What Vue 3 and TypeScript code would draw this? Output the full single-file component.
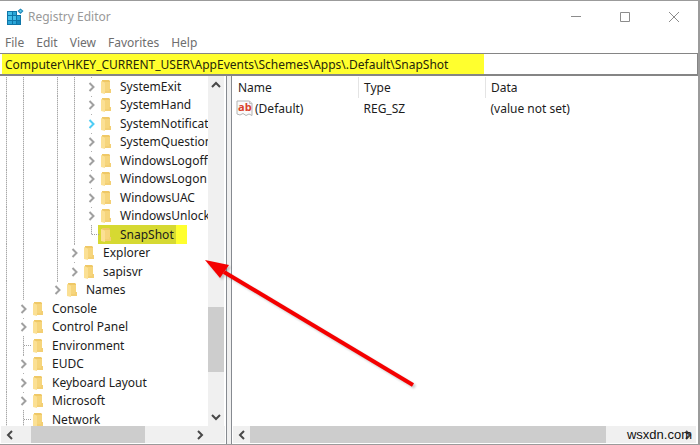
<script setup lang="ts">
import { ref } from 'vue'

// Each character of `cols` is one indent column:
// '|' guide, ' ' empty, '>' expander, '+' branch, 'L' last branch
interface TreeNode {
  cols: string
  name: string
  hot?: boolean
  selected?: boolean
}

const nodes: TreeNode[] = [
  { cols: '|| ||>', name: 'SystemExit' },
  { cols: '|| ||>', name: 'SystemHand' },
  { cols: '|| ||>', name: 'SystemNotification', hot: true },
  { cols: '|| ||>', name: 'SystemQuestion' },
  { cols: '|| ||>', name: 'WindowsLogoff' },
  { cols: '|| ||>', name: 'WindowsLogon' },
  { cols: '|| ||>', name: 'WindowsUAC' },
  { cols: '|| ||>', name: 'WindowsUnlock' },
  { cols: '|| ||L', name: 'SnapShot', selected: true },
  { cols: '|| |>', name: 'Explorer' },
  { cols: '|| |>', name: 'sapisvr' },
  { cols: '|| >', name: 'Names' },
  { cols: '|>', name: 'Console' },
  { cols: '|>', name: 'Control Panel' },
  { cols: '|+', name: 'Environment' },
  { cols: '|>', name: 'EUDC' },
  { cols: '|>', name: 'Keyboard Layout' },
  { cols: '|>', name: 'Microsoft' },
  { cols: '|+', name: 'Network' },
]

const menus = ['File', 'Edit', 'View', 'Favorites', 'Help']
const path = ref('Computer\\HKEY_CURRENT_USER\\AppEvents\\Schemes\\Apps\\.Default\\SnapShot')

const cellClass: Record<string, string> = {
  '|': 'guide',
  ' ': 'blank',
  '+': 'guide branch',
  L: 'last branch',
}
</script>

<template>
  <div class="window">
    <header class="titlebar">
      <svg class="app-icon" viewBox="0 0 17 18" aria-hidden="true">
        <path d="M0 3h14v14H0z" fill="#0f76a8" />
        <path d="M1 4h4v3H1zM1 8h4v4H1zM6 8h3v4H6z" fill="#45bfe8" />
        <path d="M6 4h3v3H6zM1 13h4v3H1zM6 13h3v3H6zM10 8h3v4h-3z" fill="#2ba6d8" />
        <path d="M10 13h3v3h-3z" fill="#1688bc" />
        <path d="M10 2h7v5h-7z" fill="#fff" />
        <path d="M13.500 0.500l3 2.500-3 3-3-3z" fill="#1c86b8" />
        <path d="M13.500 1.800l1.500 1.300-1.500 1.500-1.500-1.500z" fill="#62c8ea" />
      </svg>
      <h1>Registry Editor</h1>
      <div class="caption">
        <button type="button" aria-label="Minimize">
          <svg viewBox="0 0 12 12"><path d="M1 5.500h10" /></svg>
        </button>
        <button type="button" aria-label="Maximize">
          <svg viewBox="0 0 12 12"><path d="M1.500 1.500h9v9h-9z" /></svg>
        </button>
        <button type="button" aria-label="Close">
          <svg viewBox="0 0 12 12"><path d="M1 1l10 10M11 1L1 11" /></svg>
        </button>
      </div>
    </header>

    <nav class="menubar">
      <button v-for="m in menus" :key="m" type="button">{{ m }}</button>
    </nav>

    <div class="address">
      <input v-model="path" type="text" aria-label="Address" spellcheck="false" />
    </div>

    <main class="panes">
      <section class="pane tree-pane">
        <div class="tree-body">
          <ul class="tree">
            <li v-for="n in nodes" :key="n.name">
              <template v-for="(c, i) in n.cols.split('')" :key="i">
                <button
                  v-if="c === '>'"
                  type="button"
                  class="cell expander"
                  :class="{ hot: n.hot }"
                  :aria-label="'Expand ' + n.name"
                >
                  <svg viewBox="0 0 7 10"><path d="M1.500 1l4 4-4 4" /></svg>
                </button>
                <span v-else class="cell" :class="cellClass[c]"></span>
              </template>
              <span class="node" :class="{ selected: n.selected }">
                <svg class="folder" viewBox="0 0 11 14" aria-hidden="true">
                  <path d="M1 0h7l1 1v10H1z" fill="#efc866" />
                  <path d="M4 2h5v9.500H4z" fill="#f6d57c" />
                  <path d="M0 1l4 1.500V14L0 13z" fill="#fbe094" />
                  <path d="M8 9h2v4H4v-2h4z" fill="#f3cf74" />
                </svg>
                <span>{{ n.name }}</span>
              </span>
            </li>
          </ul>
          <div class="vscroll">
            <button type="button" aria-label="Scroll up">
              <svg viewBox="0 0 10 10"><path d="M1 7l4-4 4 4" /></svg>
            </button>
            <div class="track"><div class="thumb"></div></div>
            <button type="button" aria-label="Scroll down">
              <svg viewBox="0 0 10 10"><path d="M1 3l4 4 4-4" /></svg>
            </button>
          </div>
        </div>
        <div class="hscroll with-corner">
          <button type="button" aria-label="Scroll left">
            <svg viewBox="0 0 10 10"><path d="M7 1L3 5l4 4" /></svg>
          </button>
          <div class="track"><div class="thumb"></div></div>
          <button type="button" aria-label="Scroll right">
            <svg viewBox="0 0 10 10"><path d="M3 1l4 4-4 4" /></svg>
          </button>
        </div>
      </section>

      <section class="pane list-pane">
        <div class="list-body">
          <table>
            <thead>
              <tr>
                <th class="c-name" scope="col">Name</th>
                <th class="c-type" scope="col">Type</th>
                <th scope="col">Data</th>
              </tr>
            </thead>
            <tbody>
              <tr>
                <td class="value">
                  <svg class="ab" viewBox="0 0 17 17" aria-hidden="true">
                    <path d="M1 1h12.500l2.500 2.500v12l-3-1.500-3 1.500-3-2-3 1.500-3-1z" fill="#fafafa" stroke="#b4b4b4" />
                    <path d="M13.500 1v2.500H16" fill="#ddd" stroke="#c0c0c0" />
                    <text x="2" y="11">ab</text>
                  </svg>
                  <span>(Default)</span>
                </td>
                <td>REG_SZ</td>
                <td>(value not set)</td>
              </tr>
            </tbody>
          </table>
        </div>
        <div class="hscroll">
          <button type="button" aria-label="Scroll left">
            <svg viewBox="0 0 10 10"><path d="M7 1L3 5l4 4" /></svg>
          </button>
          <div class="track"><div class="thumb"></div></div>
          <button type="button" aria-label="Scroll right">
            <svg viewBox="0 0 10 10"><path d="M3 1l4 4-4 4" /></svg>
          </button>
        </div>
      </section>
    </main>

    <svg class="arrow" viewBox="0 0 220 136" aria-hidden="true">
      <g class="shadow" transform="translate(2 2)">
        <path d="M20 13l189 113" />
        <path class="head" d="M1 1l24 5-9 13z" />
      </g>
      <path d="M20 13l189 113" />
      <path class="head" d="M1 1l24 5-9 13z" />
    </svg>
    <span class="watermark">wsxdn.com</span>
  </div>
</template>

<style>
body {
  margin: 0;
  background: #fff;
}
</style>

<style scoped>
.window {
  position: relative;
  display: flex;
  flex-direction: column;
  box-sizing: border-box;
  height: 100vh;
  overflow: hidden;
  border: 1px solid #9b9b9b;
  border-width: 1px 2px 1px 0;
  background: #fff;
  color: #1c1c1c;
  font: 12px/18px "Noto Sans", "Open Sans", sans-serif;
}
button {
  display: flex;
  align-items: center;
  justify-content: center;
  margin: 0;
  padding: 0;
  border: 0;
  background: none;
  color: inherit;
  font: inherit;
}
svg {
  display: block;
  flex: none;
}

.titlebar {
  display: flex;
  align-items: center;
  height: 31px;
  padding-left: 7px;
}
.app-icon {
  width: 17px;
  height: 18px;
}
h1 {
  flex: 1;
  margin: 0;
  padding-left: 4px;
  color: #999;
  font-size: 12px;
  font-weight: 400;
}
.caption {
  display: flex;
}
.caption button {
  width: 49px;
  height: 30px;
}
.caption svg {
  width: 12px;
  height: 12px;
  fill: none;
  stroke: #8c8c8c;
}

.menubar {
  display: flex;
  gap: 12px;
  height: 21px;
  padding-left: 5px;
  color: #6e6e6e;
}

.address {
  display: flex;
  padding-left: 2px;
  border: 1px solid #858585;
  border-width: 1px 1px 2px 0;
}
.address input {
  flex: 1;
  min-width: 0;
  height: 20px;
  margin: 0;
  padding: 0 3px;
  border: 0;
  outline: 0;
  background: linear-gradient(90deg, #ffff2e 482px, #fff 482px);
  color: #26260a;
  font: inherit;
}

.panes {
  display: flex;
  flex: 1;
  gap: 4px;
  min-height: 0;
  background: #f0f0f0;
}
.pane {
  display: flex;
  flex-direction: column;
  min-width: 0;
  box-sizing: border-box;
  background: #fff;
}
.tree-pane {
  width: 227px;
  padding: 0 1px 1px;
  border-right: 1px solid #868a90;
}
.list-pane {
  flex: 1;
  padding: 0 2px 1px 1px;
  border-left: 1px solid #868a90;
}
.tree-body {
  display: flex;
  flex: 1;
  min-height: 0;
}
.tree {
  flex: 1;
  min-width: 0;
  margin: 0;
  padding: 1px 0 0;
  overflow: hidden;
  list-style: none;
}
.tree li {
  display: flex;
  height: 19px;
  margin-left: -3px;
  white-space: nowrap;
}
.tree li:nth-child(even) {
  height: 18px;
}
.cell {
  position: relative;
  flex: none;
  width: 17px;
}
.guide {
  background: repeating-linear-gradient(#a8a8a8 0 1px, #dedede 1px 2px) 8px 0 / 1px 100% no-repeat;
}
.last {
  background: repeating-linear-gradient(#a8a8a8 0 1px, #dedede 1px 2px) 8px 0 / 1px 10px no-repeat;
}
.branch::after {
  content: "";
  position: absolute;
  top: 9px;
  left: 9px;
  width: 7px;
  border-top: 1px dotted #a0a0a0;
}
.expander {
  background: linear-gradient(#b0b0b0, #b0b0b0) 8px 0 / 1px 1px no-repeat;
}
.expander svg {
  width: 7px;
  height: 10px;
  fill: none;
  stroke: #a0a0a0;
  stroke-width: 2;
}
.expander.hot svg {
  stroke: #4fccf4;
}
.node {
  display: flex;
  align-items: center;
  gap: 8px;
  margin-left: -2px;
  padding: 0 2px 0 3px;
}
.folder {
  width: 11px;
  height: 14px;
}
.selected {
  background: #d6d932;
  box-shadow: 11px 0 #ffff2e;
}

.vscroll {
  display: flex;
  flex-direction: column;
  width: 16px;
  margin-right: 1px;
  background: #f0f0f0;
}
.vscroll button {
  height: 18px;
}
.vscroll .track {
  display: flex;
  flex: 1;
  flex-direction: column;
  min-height: 0;
}
.vscroll .thumb {
  height: 65px;
  margin-top: 213px;
  background: #cdcdcd;
}
.vscroll svg,
.hscroll svg {
  width: 10px;
  height: 10px;
  fill: none;
  stroke: #484848;
  stroke-width: 2;
}
.hscroll {
  display: flex;
  height: 17px;
  background: #f0f0f0;
}
.hscroll.with-corner {
  padding-right: 17px;
}
.hscroll button {
  width: 17px;
}
.hscroll .track {
  display: flex;
  flex: 1;
}
.hscroll .thumb {
  width: 83%;
  background: #cdcdcd;
}
.with-corner .thumb {
  width: 66%;
  margin-left: 13px;
}

.list-body {
  flex: 1;
  min-height: 0;
}
table {
  width: 100%;
  margin-top: 1px;
  border-collapse: collapse;
  table-layout: fixed;
}
th,
td {
  height: 21px;
  padding: 0 0 0 5px;
  font-weight: 400;
  text-align: left;
  white-space: nowrap;
}
th {
  border-right: 1px solid #e4e4e4;
}
th:last-child {
  border-right: 0;
}
.c-name {
  width: 120px;
}
.c-type {
  width: 121px;
}
.value {
  display: flex;
  align-items: center;
  gap: 2px;
  padding-left: 3px;
}
.ab {
  width: 17px;
  height: 17px;
}
.ab text {
  fill: #d9412b;
  font: 700 11px "Open Sans", sans-serif;
}

.arrow {
  position: absolute;
  top: 258px;
  left: 204px;
  width: 220px;
  height: 136px;
  fill: none;
  stroke: #f40000;
  stroke-width: 4;
  pointer-events: none;
}
.arrow .head {
  fill: #f40000;
  stroke: none;
}
.shadow {
  opacity: 0.25;
  filter: blur(1px) grayscale(1);
}
.watermark {
  position: absolute;
  right: 6px;
  bottom: 0;
  color: #111;
  font: 13px/18px "Liberation Sans", Arial, sans-serif;
}
</style>
